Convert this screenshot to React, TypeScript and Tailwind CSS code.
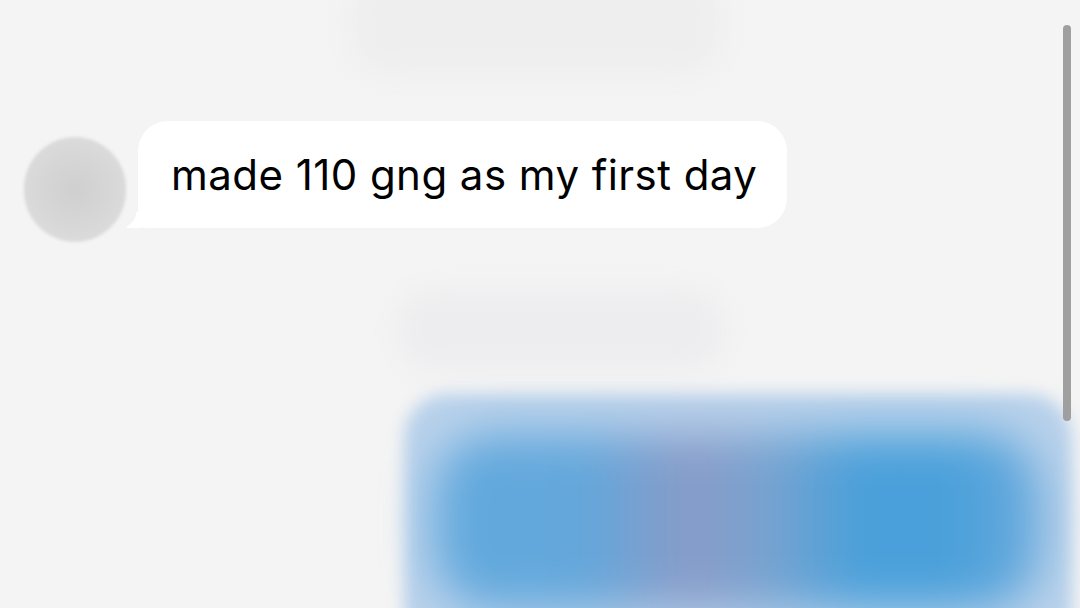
import React from "react";

const BubbleTail = () => (
  <svg
    className="absolute -left-[12px] bottom-0"
    width="16"
    height="16"
    viewBox="0 0 16 16"
  >
    <path d="M16 0 L16 16 L2 16 Q-1 16 1.5 14 C7 11 10 6 10 0 Z" fill="#ffffff" />
  </svg>
);

const Avatar = () => (
  <div className="w-[102px] h-[105px] rounded-full shrink-0 mt-[16px] blur-[1.5px] bg-[radial-gradient(circle_at_50%_50%,#cfcfcf_0%,#d6d6d6_45%,#e0e0e0_100%)]" />
);

const IncomingMessage = ({ text }: { text: string }) => (
  <div className="flex items-start pl-[24px] mt-[47px]">
    <Avatar />
    <div className="relative ml-[12px] bg-white rounded-[30px] rounded-bl-[8px] h-[107px] w-[649px] pl-[33px] flex items-center">
      <BubbleTail />
      <p className="text-[42px] leading-none text-black tracking-[0.45px] font-['Inter','Liberation_Sans',sans-serif]">
        {text}
      </p>
    </div>
  </div>
);

const App = () => {
  return (
    <div className="relative w-[1080px] h-[608px] overflow-hidden bg-[#f4f4f4] flex flex-col">
      {/* blurred message above */}
      <div className="ml-[350px] -mt-[32px] w-[372px] h-[106px] rounded-[36px] bg-[#eeeeee] blur-[12px] shrink-0" />

      {/* incoming message */}
      <IncomingMessage text="made 110 gng as my first day" />

      {/* blurred gray bubble */}
      <div className="ml-[398px] mt-[48px] w-[326px] h-[80px] rounded-[36px] bg-[#ededef] blur-[12px] shrink-0" />

      {/* blurred outgoing blue bubble */}
      <div className="ml-[404px] mt-[24px] w-[668px] h-[280px] rounded-[44px] bg-[#bad2eb] blur-[8px] pt-[40px] px-[30px] shrink-0">
        <div className="w-full h-[175px] rounded-[60px] blur-[22px] bg-[linear-gradient(to_right,#62a9dd_0%,#63a7db_25%,#8a9bc7_42%,#78a3d0_55%,#49a0da_70%,#4aa0da_85%,#6aaadc_100%)]" />
      </div>

      {/* scrollbar */}
      <div className="absolute right-[9px] top-[25px] w-[8px] h-[396px] rounded-full bg-[#9f9f9f]" />
    </div>
  );
};

export default App;
